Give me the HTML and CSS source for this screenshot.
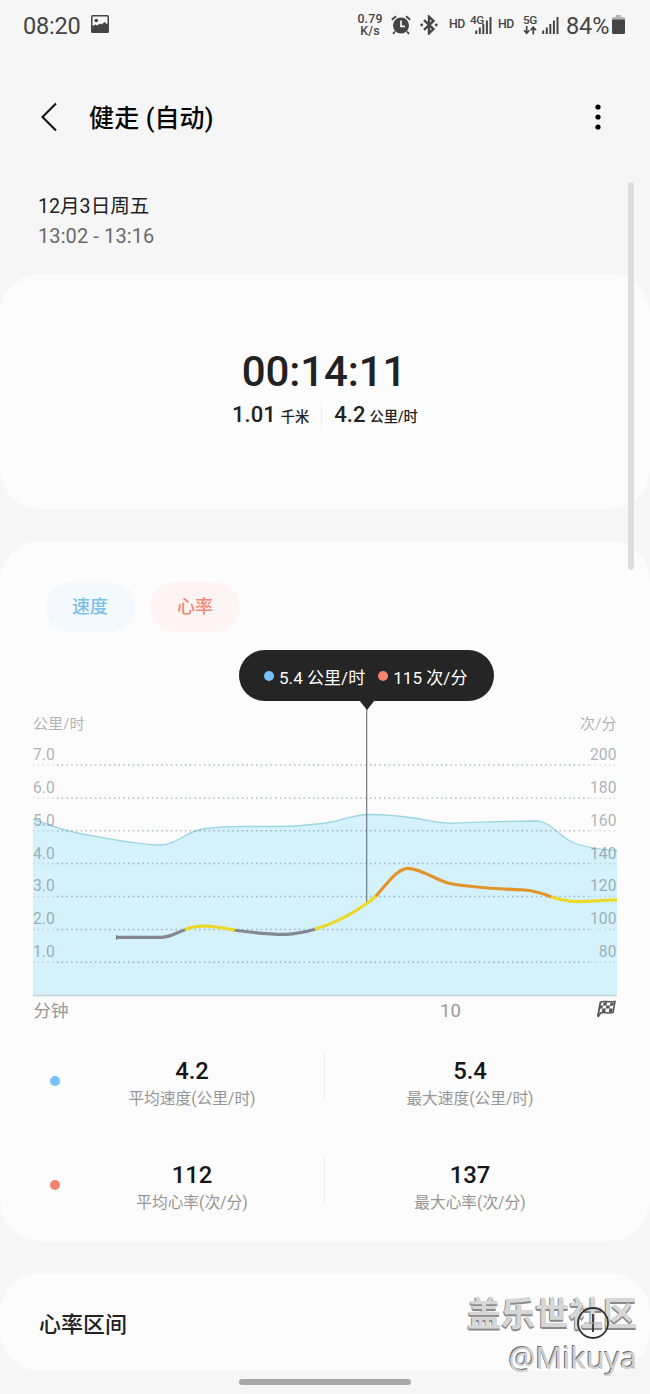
FILE: index.html
```html
<!DOCTYPE html>
<html lang="zh-CN">
<head>
<meta charset="utf-8">
<title>健走 (自动)</title>
<link rel="stylesheet" href="styles.css">
</head>
<body>
<div class="phone">
  <div class="status">
    <span class="clock">08:20</span>
    <svg class="photo" width="18" height="18" viewBox="0 0 18 18"><path fill="#454545" fill-rule="evenodd" d="M1.500 0h15A1.500 1.500 0 0 1 18 1.500v15a1.500 1.500 0 0 1-1.500 1.500h-15A1.500 1.500 0 0 1 0 16.500v-15A1.500 1.500 0 0 1 1.500 0ZM1.500 1.500v9.500L4.500 9.500l1.500 1L9 8.500l1.500 1 3-2.500 3 2.500V1.500Z"/><circle cx="5.300" cy="5.500" r="1.800" fill="#454545"/></svg>
    <span class="rate">0.79<br>K/s</span>
    <svg class="alarm" width="20" height="20" viewBox="0 0 20 20"><g fill="none" stroke="#454545" stroke-width="1.800"><path d="M.8 4.800 5 1.200M19.200 4.800 15 1.200M4 16.500 2 18.800M16 16.500l2 2.300"/></g><circle cx="10" cy="10.500" r="8" fill="#454545"/><path d="M10 5.500v5.800h4" fill="none" stroke="#f6f6f6" stroke-width="1.700"/></svg>
    <svg class="bt" width="18" height="20" viewBox="0 0 18 20"><path d="M4 5.200 13.500 14 9 18.300V1.700L13.500 6 4 14.800" fill="none" stroke="#454545" stroke-width="2.400"/><circle cx="1.700" cy="10" r="1.400" fill="#454545"/><circle cx="16.300" cy="10" r="1.400" fill="#454545"/></svg>
    <span class="hd hd-one">HD</span>
    <span class="net net-4g"><span class="gen">4G</span>
      <svg class="bars" width="17" height="18" viewBox="0 0 17 18"><path d="M1.200 14.500V18M4.800 11.500V18M8.300 8V18M11.900 4.500V18M15.500 1V18" stroke="#454545" stroke-width="2"/></svg></span>
    <span class="hd hd-two">HD</span>
    <span class="net net-5g"><span class="gen">5G</span>
      <svg class="arrows" width="14" height="9" viewBox="0 0 14 9"><path d="M3.700 0v7M1 4.300l2.700 3 2.700-3M10.300 8.500v-7M7.600 4.200l2.700-3 2.700 3" fill="none" stroke="#454545" stroke-width="1.700"/></svg></span>
    <svg class="bars-5g" width="17" height="18" viewBox="0 0 17 18"><path d="M1.200 14.500V18M4.800 11.500V18M8.300 8V18M11.900 4.500V18M15.500 1V18" stroke="#454545" stroke-width="2"/></svg>
    <span class="percent">84%</span>
    <svg class="battery" width="13" height="19" viewBox="0 0 13 19"><path d="M4 0h5v2h2.500A1.500 1.500 0 0 1 13 3.500V5H0V3.500A1.500 1.500 0 0 1 1.500 2H4Z" fill="#b5b5b5"/><path d="M0 4.500h13v13a1.500 1.500 0 0 1-1.500 1.500h-10A1.500 1.500 0 0 1 0 17.500Z" fill="#454545"/></svg>
  </div>

  <header class="topbar">
    <svg class="back" width="18" height="30" viewBox="0 0 18 30"><path d="M16 1.500 2.500 15 16 28.500" fill="none" stroke="#111" stroke-width="2.100"/></svg>
    <h1 class="title">健走 (自动)</h1>
    <svg class="more" width="6" height="26" viewBox="0 0 6 26"><circle cx="3" cy="3" r="2.600"/><circle cx="3" cy="13" r="2.600"/><circle cx="3" cy="23" r="2.600"/></svg>
  </header>

  <section class="when">
    <div class="date">12月3日周五</div>
    <div class="time">13:02 - 13:16</div>
  </section>

  <section class="card summary">
    <div class="duration">00:14:11</div>
    <div class="facts">
      <div class="fact"><b>1.01</b><span>千米</span></div>
      <div class="fact fact-speed"><b>4.2</b><span>公里/时</span></div>
    </div>
  </section>

  <section class="card details">
    <div class="chips"><span class="chip chip-speed">速度</span><span class="chip chip-heart">心率</span></div>
    <div class="chart">
      <svg class="plot" width="650" height="390" viewBox="0 640 650 390">
        <path fill="#d4f1fc" d="M33 819C46 824 60 830 80 833.500S135 845 160 845C176 845 184 833 201 829.500C214 826.500 225 827 245 826.500H280C300 826.500 315 824 326 823C344 820.500 352 814.500 370 814.500S400 816 414 818S436 823.200 449 823.200S490 821 537 821C552 822 560 838 575 843.500C588 848 600 849.500 617 850.500V995H33Z"/>
        <path fill="none" stroke="#9bd5e1" stroke-width="1.300" d="M33 819C46 824 60 830 80 833.500S135 845 160 845C176 845 184 833 201 829.500C214 826.500 225 827 245 826.500H280C300 826.500 315 824 326 823C344 820.500 352 814.500 370 814.500S400 816 414 818S436 823.200 449 823.200S490 821 537 821C552 822 560 838 575 843.500C588 848 600 849.500 617 850.500"/>
        <g class="grid">
          <path d="M57 765H589M57 798H589M57 830.700H589M57 863.500H589M57 896.500H589M57 929.500H589M57 962.300H589"/>
          <path class="faint" d="M33 765H56M33 798H56M33 830.700H56M33 863.500H56M33 896.500H56M33 929.500H56M33 962.300H56M590 765H617M590 798H617M590 830.700H617M590 863.500H617M590 896.500H617M590 929.500H617M590 962.300H617"/>
        </g>
        <path d="M33 995.500H617" stroke="#c3d6df" stroke-width="1.300"/>
        <path d="M366.700 705V904" stroke="#727c83" stroke-width="1.200"/>
        <g class="pulse">
          <path stroke="#83898f" d="M117 937.300H162C172 937 177 932 186 929.500M233 930C255 933 270 934.500 286 934.300C297 934 307 931.500 316 929"/>
          <path stroke="#ecd92b" d="M185 929.700C198 923.500 214 926.500 235 930.200M315 929.300C338 922 355 912 366 904C371 901 374 898 376.500 895.500M550 896.500C565 901.500 575 902.300 590 901.200L617 899.800"/>
          <path stroke="#e19529" d="M376 896C387 884 397 868.300 408.500 868.300C422 869 438 881 450 883.500C468 887 500 889 525 890C537 891 543 894 551 896.700"/>
        </g>
        <path d="M116.500 935V940" stroke="#777e83" stroke-width="1"/>
        <g class="axis">
          <text x="33" y="728.500" class="unit">公里/时</text>
          <text x="33" y="760">7.0</text><text x="33" y="793">6.0</text><text x="33" y="825.500">5.0</text><text x="33" y="858.500">4.0</text><text x="33" y="891">3.0</text><text x="33" y="924">2.0</text><text x="33" y="956.500">1.0</text>
          <g text-anchor="end"><text x="616.500" y="728.500" class="unit">次/分</text>
          <text x="616.500" y="760">200</text><text x="616.500" y="793">180</text><text x="616.500" y="825.500">160</text><text x="616.500" y="858.500">140</text><text x="616.500" y="891">120</text><text x="616.500" y="924">100</text><text x="616.500" y="956.500">80</text></g>
        </g>
        <g class="minutes"><text x="33.500" y="1016.500">分钟</text><text x="440" y="1017" class="minute-num">10</text></g>
        <g transform="translate(597 1001)"><path d="M3.500 1C7-.5 11 1.500 18 .5L16 11.500C11 13 8 10.500 3.500 12L1 16" fill="none" stroke="#555" stroke-width="1.600"/><path d="M3.500 1 .8 15.500" stroke="#555" stroke-width="1.800"/><path fill="#555" d="M6.500 1.500h3.500l-.6 3H6ZM13.500 1.700h3.300l-.6 3h-3.200ZM3.200 4.500H6l-.6 3H2.700ZM9.400 4.500h3.600l-.6 3H8.800ZM5.400 7.500h3.400l-.6 3.500H4.900ZM12.400 7.500h3.200l-.6 3.500h-3.200Z"/></g>
      </svg>
      <div class="tip"><i class="dot blue"></i><span class="tip-speed">5.4 公里/时</span><i class="dot red"></i><span>115 次/分</span></div>
    </div>
    <div class="stats">
      <div class="row"><i class="dot blue"></i>
        <div class="stat"><b>4.2</b><span>平均速度(公里/时)</span></div>
        <div class="stat stat-max"><b>5.4</b><span>最大速度(公里/时)</span></div></div>
      <div class="row"><i class="dot red"></i>
        <div class="stat"><b>112</b><span>平均心率(次/分)</span></div>
        <div class="stat stat-max"><b>137</b><span>最大心率(次/分)</span></div></div>
    </div>
  </section>

  <section class="card zones">
    <h2 class="zones-title">心率区间</h2>
    <svg class="add" width="34" height="34" viewBox="0 0 34 34"><circle cx="17" cy="17" r="15" fill="none" stroke="#333" stroke-width="1.800"/><path d="M17 8V26" stroke="#333" stroke-width="1.800"/><path d="M8 17H26" stroke="#aaa" stroke-width="1.200"/></svg>
  </section>
  <div class="home-pill"></div>
  <div class="scroll"></div>
  <div class="mark"><span class="mark-site">盖乐世社区</span><span class="mark-user">@Mikuya</span></div>
</div>
</body>
</html>
```
FILE: styles.css
```css
* { box-sizing: border-box; }
body { margin: 0; background: #f6f6f6; }
.phone { position: relative; width: 650px; height: 1394px; overflow: hidden; background: #f6f6f6; font-family: Roboto, "Noto Sans CJK SC", sans-serif; color: #222; }

.status { display: flex; align-items: flex-start; height: 50px; padding: 15px 22px 0 23px; color: #454545; }
.status > * { flex: none; }
.clock, .percent { font-size: 23.500px; line-height: 22px; width: 58px; letter-spacing: -.2px; }
.photo { margin-left: 10px; }
.rate { width: 28px; margin: -2px 0 0 247px; font-size: 12.300px; font-weight: 500; line-height: 12px; letter-spacing: .2px; text-align: center; }
.alarm { margin-left: 7px; }
.bt { margin: 0 0 0 9px; }
.hd { font-size: 12.300px; font-weight: 500; line-height: 18px; width: 17px; letter-spacing: -.5px; }
.hd-one { margin-left: 11px; }
.hd-two { margin-left: 6px; }
.net { position: relative; height: 20px; }
.net-4g { width: 22px; margin-left: 4px; }
.net-5g { width: 16px; margin-left: 8px; }
.gen { display: block; font-size: 11.800px; font-weight: 500; line-height: 11px; letter-spacing: -.4px; }
.bars { position: absolute; right: 0; top: 1px; }
.arrows { position: absolute; left: 0; top: 11px; }
.bars-5g { margin: 1px 0 0 3px; }
.percent { width: 45px; margin-left: 7px; letter-spacing: -.1px; }
.battery { margin-left: 1px; }

.topbar { display: flex; align-items: center; height: 134px; padding: 0 49px 0 40px; }
.title { flex: 1; margin: 3px 0 0 31px; font-size: 25px; font-weight: 500; line-height: 34px; letter-spacing: .15px; color: #060606; }

.when { height: 90px; padding: 8px 38px 0; font-size: 20px; }
.date { line-height: 30px; font-size: 19.600px; }
.time { line-height: 29px; color: #6a6a6a; letter-spacing: .1px; }

.card { background: #fcfcfc; border-radius: 40px; }
.summary { height: 235px; padding-top: 73px; text-align: center; }
.duration { font-size: 42px; font-weight: 500; line-height: 50px; margin-left: -2px; letter-spacing: -.1px; }
.facts { display: flex; justify-content: center; margin-top: 5px; line-height: 26px; }
.fact { display: flex; align-items: baseline; gap: 5px; padding-right: 12px; }
.fact b { font-size: 22px; font-weight: 500; }
.fact span { font-size: 14.300px; font-weight: 500; }
.fact-speed { gap: 4px; padding: 0 0 0 12px; border-left: 1px solid #eee; }

.details { height: 700px; margin-top: 32px; padding-top: 41px; }
.chips { display: flex; gap: 15px; height: 50px; margin-left: 45px; }
.chip { width: 90px; height: 50px; border-radius: 25px; font-size: 18px; font-weight: 500; line-height: 49px; text-align: center; }
.chip-speed { background: #f3f9fd; color: #78bfe9; }
.chip-heart { background: #fef4f3; color: #f28772; }
.chart { position: relative; height: 390px; margin-top: 8px; }
.plot { display: block; }
.grid path { stroke: #5f747e; stroke-opacity: .48; stroke-width: 1.500; stroke-dasharray: 1.500 3.240; }
.grid .faint { stroke-opacity: .22; }
.pulse path { fill: none; stroke-width: 3.200; }
.axis { font-size: 15.700px; fill: #737b80; fill-opacity: .58; }
.unit { font-size: 15.100px; }
.minutes { font-size: 17.500px; fill: #999; }
.minute-num { font-size: 18.500px; }
.tip { position: absolute; left: 239px; top: 10px; display: flex; align-items: center; width: 255px; height: 51px; padding: 1px 0 0 25px; border-radius: 26px; background: #252525; color: #fff; font-size: 17px; letter-spacing: .05px; white-space: nowrap; }
.tip::after { content: ""; position: absolute; left: 120px; top: 50px; border: 8px solid transparent; border-top: 10px solid #252525; border-bottom: 0; }
.dot { flex: none; width: 10px; height: 10px; border-radius: 50%; }
.blue { background: #79c1f4; }
.red { background: #f4836f; }
.tip .dot { margin-right: 5px; }
.tip-speed { margin-right: 13px; }
.stats { padding-top: 23px; }
.row { display: flex; align-items: center; height: 48px; margin: 0 42px 56px 50px; }
.row > .dot { margin-top: 8px; }
.stat { flex: none; display: flex; flex-direction: column; align-items: center; width: 264px; height: 48px; padding-top: 1px; }
.stat-max { width: 291px; border-left: 1px solid #eee; }
.stat b { font-size: 23.800px; font-weight: 500; line-height: 34px; color: #161616; }
.stat span { font-size: 15.700px; line-height: 22px; color: #969696; white-space: nowrap; }

.zones { display: flex; align-items: center; justify-content: space-between; height: 98px; margin-top: 32px; padding: 2px 40px 0 39px; }
.zones-title { margin: -2px 0 0; font-size: 22px; font-weight: 500; color: #222; }
.add { position: relative; z-index: 2; }
.home-pill { width: 172px; height: 6px; margin: 8px 0 0 239px; border-radius: 3px; background: #a8a8a8; }
.scroll { position: absolute; left: 628px; top: 182px; width: 6px; height: 388px; border-radius: 3px; background: #dedede; }
.mark { position: absolute; right: 13px; top: 1289px; display: flex; flex-direction: column; align-items: flex-end; white-space: nowrap; }
.mark-site { font-family: "Noto Sans CJK SC", sans-serif; font-size: 34px; font-weight: 700; line-height: 46px; color: #d6d6d6; text-shadow: -1px 1px 0 #8a8a8a, 0 2px 0 #8a8a8a; }
.mark-user { font-family: "Noto Sans", sans-serif; font-size: 30px; font-weight: 400; line-height: 46px; color: #cfcfcf; text-shadow: -1px -1px 0 #707070; }
```
